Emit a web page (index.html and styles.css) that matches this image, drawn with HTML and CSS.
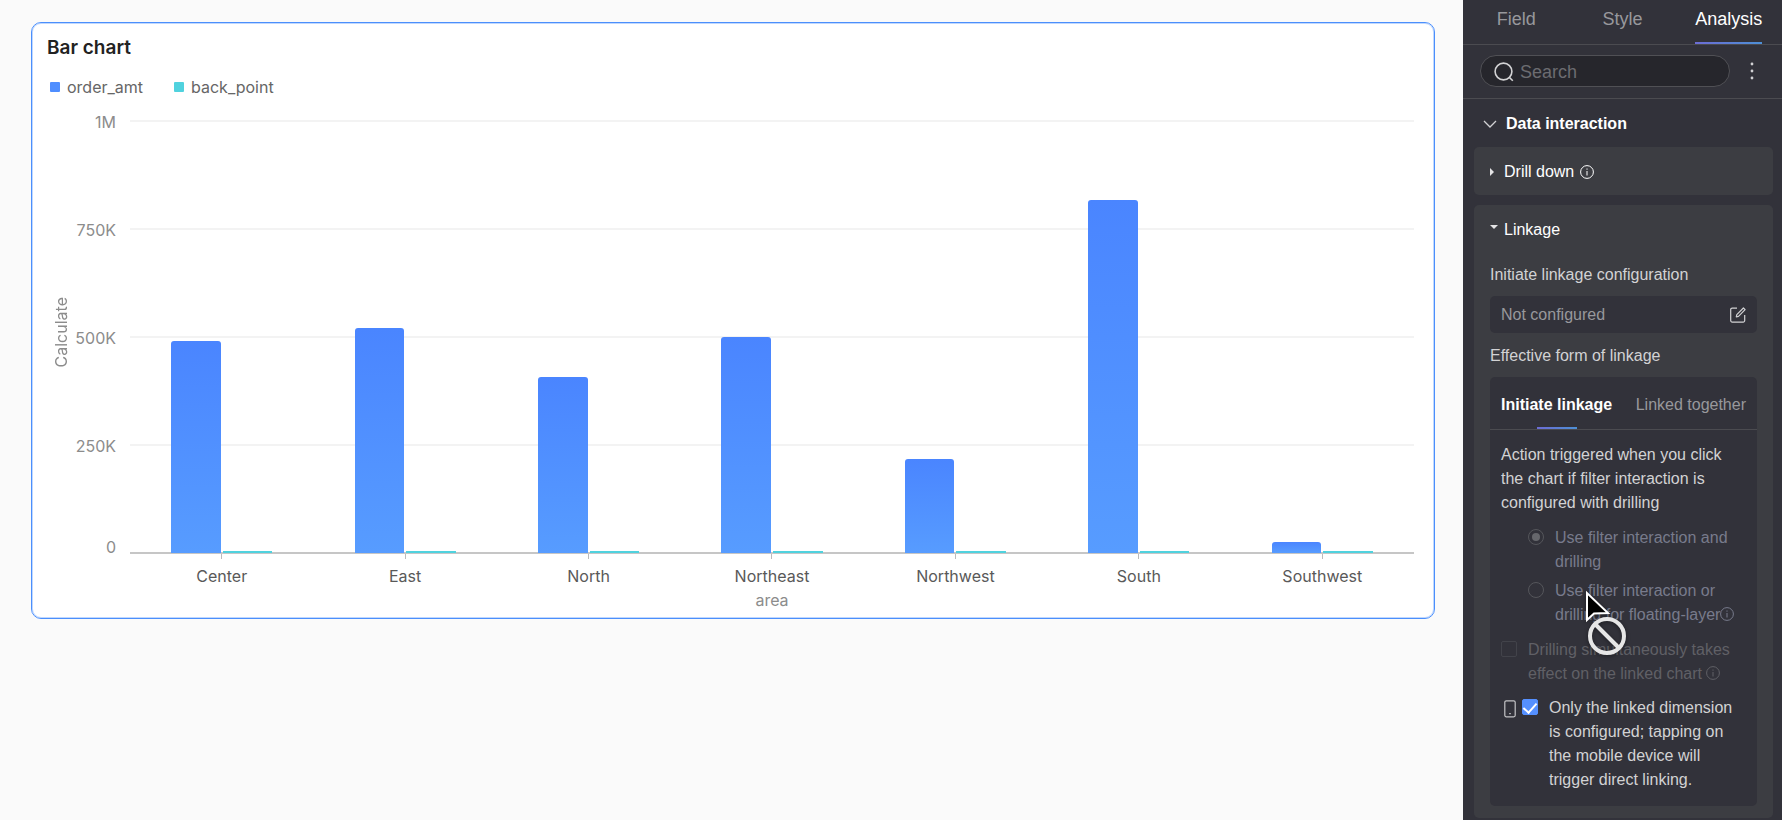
FILE: index.html
```html
<!DOCTYPE html>
<html lang="en">
<head>
  <meta charset="UTF-8" />
  <meta name="viewport" content="width=device-width, initial-scale=1.0"/>
  <title>Bar chart</title>
  <link rel="stylesheet" href="styles.css">
</head>
<body>
  <main class="canvas">
    <section class="chart-card">
      <h1>Bar chart</h1>
      <ul class="legend">
        <li><i class="swatch blue"></i>order_amt</li>
        <li><i class="swatch teal"></i>back_point</li>
      </ul>

      <div class="chart">
        <div class="y-title">Calculate</div>
        <div class="y-labels">
          <span>1M</span>
          <span>750K</span>
          <span>500K</span>
          <span>250K</span>
          <span>0</span>
        </div>
        <div class="plot">
          <div class="grid-lines"><i></i><i></i><i></i><i></i></div>
          <div class="bars">
            <div class="group"><div class="bar" style="height: 48.9%"></div><div class="bar back"></div></div>
            <div class="group"><div class="bar" style="height: 52%"></div><div class="bar back"></div></div>
            <div class="group"><div class="bar" style="height: 40.7%"></div><div class="bar back"></div></div>
            <div class="group"><div class="bar" style="height: 49.9%"></div><div class="bar back"></div></div>
            <div class="group"><div class="bar" style="height: 21.6%"></div><div class="bar back"></div></div>
            <div class="group"><div class="bar" style="height: 81.5%"></div><div class="bar back"></div></div>
            <div class="group"><div class="bar" style="height: 2.5%"></div><div class="bar back"></div></div>
          </div>
        </div>
        <div class="x-labels">
          <span>Center</span>
          <span>East</span>
          <span>North</span>
          <span>Northeast</span>
          <span>Northwest</span>
          <span>South</span>
          <span>Southwest</span>
        </div>
        <div class="x-title">area</div>
      </div>
    </section>
  </main>

  <aside class="sidebar">
    <nav class="tabs">
      <button type="button">Field</button>
      <button type="button">Style</button>
      <button type="button" class="active">Analysis</button>
    </nav>

    <div class="search-row">
      <label class="search">
        <svg width="20" height="20" viewBox="0 0 20 20" fill="none" stroke="#d2d2d4" stroke-width="1.6">
          <circle cx="9.5" cy="9.5" r="8.4"/>
          <path d="M15.5 15.5l3.3 3.3"/>
        </svg>
        <input type="text" placeholder="Search" aria-label="Search">
      </label>
      <button type="button" class="more" aria-label="More">
        <svg width="4" height="18" viewBox="0 0 4 18" fill="#d2d2d4">
          <circle cx="2" cy="2" r="1.4"/><circle cx="2" cy="9" r="1.4"/><circle cx="2" cy="16" r="1.4"/>
        </svg>
      </button>
    </div>

    <h2 class="section-title">
      <svg width="14" height="8" viewBox="0 0 14 8" fill="none" stroke="#d2d2d4" stroke-width="1.3"><path d="M1 1l6 6 6-6"/></svg>
      Data interaction
    </h2>

    <section class="block">
      <h3 class="block-title">
        <svg class="caret" width="8" height="8" viewBox="0 0 8 8" fill="#e4e4e5"><path d="M0 0l4 4-4 4z"/></svg>
        Drill down
        <svg class="info" width="14" height="14" viewBox="0 0 14 14" fill="none" stroke="currentColor"><circle cx="7" cy="7" r="6.4"/><path d="M7 6v4.5M7 3.5v1.2"/></svg>
      </h3>
    </section>

    <section class="block">
      <h3 class="block-title">
        <svg class="caret open" width="8" height="8" viewBox="0 0 8 8" fill="#e4e4e5"><path d="M0 1h8L4 5z"/></svg>
        Linkage
      </h3>
      <p class="field-label">Initiate linkage configuration</p>
      <div class="field">
        <span>Not configured</span>
        <button type="button" aria-label="Edit">
          <svg width="16" height="16" viewBox="0 0 16 16" fill="none" stroke="#d2d2d4" stroke-width="1.2" stroke-linejoin="round">
            <path d="M7 1.1H2.2a1.5 1.5 0 0 0-1.5 1.5v11a1.5 1.5 0 0 0 1.5 1.5h11a1.5 1.5 0 0 0 1.5-1.5V8"/>
            <path d="M6.3 9.8l.5-2.2 6.6-6.6 1.7 1.7-6.6 6.6z"/>
          </svg>
        </button>
      </div>
      <p class="field-label">Effective form of linkage</p>

      <div class="panel">
        <div class="sub-tabs">
          <button type="button" class="active">Initiate linkage</button>
          <button type="button">Linked together</button>
        </div>
        <div class="panel-body">
          <p class="hint">Action triggered when you click the chart if filter interaction is configured with drilling</p>
          <div class="radios">
            <label class="option">
              <input type="radio" name="mode" checked disabled>
              <span>Use filter interaction and drilling</span>
            </label>
            <label class="option">
              <input type="radio" name="mode" disabled>
              <span>Use filter interaction or drilling for floating-layer<svg class="info" width="14" height="14" viewBox="0 0 14 14" fill="none" stroke="currentColor"><circle cx="7" cy="7" r="6.4"/><path d="M7 6v4.5M7 3.5v1.2"/></svg></span>
            </label>
            <svg class="cursor" width="42" height="68" viewBox="0 0 42 68">
              <path d="M2 3v27l7-6.5 14-.5z" fill="#000" stroke="#fff" stroke-width="2"/>
              <g fill="none" stroke="#e6e6e6" stroke-width="4"><circle cx="22" cy="46" r="17"/><path d="M10 34l24 24"/></g>
            </svg>
          </div>
          <label class="option dim">
            <input type="checkbox" disabled>
            <span>Drilling simultaneously takes effect on the linked chart <svg class="info" width="14" height="14" viewBox="0 0 14 14" fill="none" stroke="currentColor"><circle cx="7" cy="7" r="6.4"/><path d="M7 6v4.5M7 3.5v1.2"/></svg></span>
          </label>
          <label class="option mobile">
            <svg width="12" height="18" viewBox="0 0 12 18" fill="none" stroke="#c4c4c6" stroke-width="1.2"><rect x=".8" y=".8" width="10.4" height="16" rx="1.5"/><path d="M5.2 13.6h1.6"/></svg>
            <input type="checkbox" checked>
            <span>Only the linked dimension is configured; tapping on the mobile device will trigger direct linking.</span>
          </label>
        </div>
      </div>
    </section>
  </aside>
</body>
</html>
```
FILE: styles.css
```css
:root {
  --bg: #fafafa;
  --side: #32323a;
  --block: #3c3d42;
  --line: #4b4b50;
  --blue: #4b8ffc;
  --teal: #50d2de;
  --font: "Liberation Sans", Arial, sans-serif;
  --chart-font: Inter, "Liberation Sans", sans-serif;
}

* {
  box-sizing: border-box;
}

body {
  margin: 0;
  min-height: 100vh;
  display: flex;
  font-family: var(--font);
  font-size: 16px;
  line-height: 24px;
  background-color: var(--bg);
}

h1, h2, h3, p, ul {
  margin: 0;
  padding: 0;
}

button {
  padding: 0;
  border: none;
  background: none;
  font: inherit;
  color: inherit;
  cursor: pointer;
}

svg {
  flex: none;
}

.canvas {
  flex: 1;
  min-width: 0;
  padding: 22px 28px 22px 31px;
}

/* chart */
.chart-card {
  padding: 13px 20px 6px 15px;
  border: 1px solid var(--blue);
  border-radius: 10px;
  box-shadow: inset 0 0 0 1px rgba(75, 143, 252, 0.35);
  background-color: #fff;
  font-family: var(--chart-font);
}

.chart-card h1 {
  font-size: 19px;
  font-weight: 600;
  color: #222;
}

.legend {
  display: flex;
  gap: 31px;
  padding: 15px 3px 11px;
  list-style: none;
  color: #666;
}

.legend li {
  display: flex;
  align-items: center;
  gap: 7px;
}

.swatch {
  width: 10px;
  height: 10px;
  border-radius: 1px;
}

.swatch.blue {
  background-color: #4f8eff;
}

.swatch.teal {
  background-color: var(--teal);
}

.chart {
  display: grid;
  grid-template-columns: 28px 41px 1fr;
}

.y-title {
  grid-column: 1;
  grid-row: 1;
  justify-self: center;
  align-self: center;
  writing-mode: vertical-rl;
  transform: rotate(180deg);
  color: #8c8c8c;
}

.y-labels {
  grid-column: 2;
  grid-row: 1;
  display: grid;
  grid-template-rows: repeat(3, 108px) 101px 24px;
  margin-bottom: -5px;
  text-align: right;
  color: #8c8c8c;
}

.plot {
  grid-column: 3;
  grid-row: 1;
  display: grid;
  height: 434px;
  margin: 10px 0 0 14px;
  border-bottom: 2px solid #c6c6c6;
}

.grid-lines,
.bars {
  grid-area: 1 / 1;
}

.grid-lines {
  display: grid;
  grid-template-rows: repeat(4, 1fr);
}

.grid-lines i {
  border-top: 2px solid #f3f3f3;
}

.bars {
  display: grid;
  grid-template-columns: repeat(7, 1fr);
  margin-bottom: -1px;
}

.group {
  display: flex;
  justify-content: center;
  align-items: flex-end;
  gap: 2px;
}

.bar {
  width: 27%;
  border-radius: 3px 3px 0 0;
  background: linear-gradient(#4a85ff, #579cff);
}

.bar.back {
  height: 2px;
  border-radius: 0;
  background: var(--teal);
}

.x-labels {
  grid-column: 3;
  display: grid;
  grid-template-columns: repeat(7, 1fr);
  margin-left: 14px;
  text-align: center;
  color: #595959;
}

/* tick mark above every label */
.x-labels span::before {
  content: "";
  display: block;
  width: 1px;
  height: 5px;
  margin: 0 auto 5px;
  background-color: #bbb;
}

.x-title {
  grid-column: 3;
  margin-left: 14px;
  text-align: center;
  color: #8c8c8c;
}

/* sidebar */
.sidebar {
  width: 319px;
  flex: none;
  padding-bottom: 3px;
  background-color: var(--side);
  color: #d2d2d4;
}

.tabs {
  display: grid;
  grid-template-columns: repeat(3, 1fr);
  justify-items: center;
  height: 45px;
  border-bottom: 1px solid var(--line);
  font-size: 18px;
  color: #98989c;
}

.tabs button {
  padding-bottom: 4px;
  border-bottom: 2px solid transparent;
}

.tabs .active,
.sub-tabs .active {
  color: #fff;
}

.tabs .active {
  border-image: linear-gradient(90deg, #6c6cd4, #4d90d6) 1;
}

.search-row {
  display: flex;
  align-items: center;
  gap: 20px;
  padding: 10px 28px 11px 17px;
  border-bottom: 1px solid var(--line);
}

.search {
  flex: 1;
  min-width: 0;
  display: flex;
  align-items: center;
  gap: 6px;
  height: 32px;
  padding: 1px 13px 0;
  border: 1px solid #505055;
  border-radius: 16px;
  background-color: #26262c;
}

.search input {
  flex: 1;
  min-width: 0;
  padding: 0;
  border: none;
  outline: none;
  background: none;
  font: inherit;
  font-size: 18px;
  color: #fff;
}

.search input::placeholder {
  color: #6c6c71;
}

.more {
  display: flex;
}

.section-title {
  display: flex;
  align-items: center;
  gap: 9px;
  padding: 13px 20px 11px;
  font-size: 16px;
  color: #fff;
}

.block {
  margin: 0 9px 10px 11px;
  padding: 13px 16px 11px;
  border-radius: 5px;
  background-color: var(--block);
}

.block:last-child {
  margin-bottom: 0;
  padding-bottom: 12px;
}

.block-title {
  display: flex;
  align-items: center;
  gap: 6px;
  font-size: 16px;
  font-weight: 400;
  color: #fff;
}

.caret.open {
  margin-top: -4px;
}

.field-label {
  padding-top: 11px;
}

.block-title + .field-label {
  padding-top: 21px;
}

.field {
  display: flex;
  justify-content: space-between;
  align-items: center;
  height: 37px;
  margin-top: 9px;
  padding: 1px 11px 0;
  border-radius: 5px;
  background-color: var(--side);
  color: #98989c;
}

.field button {
  display: flex;
}

.panel {
  margin-top: 9px;
  border-radius: 5px;
  background-color: var(--side);
}

.sub-tabs {
  display: flex;
  justify-content: space-between;
  padding: 0 11px;
  border-bottom: 1px solid var(--line);
  color: #98989c;
}

.sub-tabs button {
  padding-top: 16px;
}

.sub-tabs button::after {
  content: "";
  display: block;
  width: 40px;
  height: 2px;
  margin: 10px auto 0;
}

.sub-tabs .active {
  font-weight: 700;
}

.sub-tabs .active::after {
  background: linear-gradient(90deg, #6c6cd4, #4d90d6);
}

.panel-body {
  padding: 13px 11px 14px;
}

.radios {
  position: relative;
  display: grid;
  gap: 5px;
  padding: 11px 0 11px 27px;
}

.option {
  display: flex;
  gap: 11px;
}

.radios .option {
  color: #787b8c;
}

.option input {
  appearance: none;
  flex: none;
  display: grid;
  place-items: center;
  width: 16px;
  height: 16px;
  margin: 3px 0 0;
  border: 1px solid #55565b;
  border-radius: 50%;
}

.option input[type="radio"]:checked::before {
  content: "";
  width: 8px;
  height: 8px;
  border-radius: 50%;
  background-color: #66676c;
}

.option input[type="checkbox"] {
  border-color: #42434a;
  border-radius: 2px;
}

.option input[type="checkbox"]:checked {
  border-color: #5590ff;
  background-color: #5590ff;
}

.option input[type="checkbox"]:checked::before {
  content: "";
  width: 6px;
  height: 11px;
  border: solid #fff;
  border-width: 0 2px 2px 0;
  transform: translateY(-1px) rotate(42deg);
}

.info {
  vertical-align: -1px;
}

.dim {
  color: #606066;
}

.mobile {
  margin-top: 10px;
  padding-left: 3px;
}

.mobile svg {
  margin: 4px -5px 0 0;
}

/* pointer lying over the disabled options */
.cursor {
  position: absolute;
  left: 84px;
  top: 75px;
  filter: drop-shadow(0 1px 2px rgba(0, 0, 0, 0.4));
}
```
